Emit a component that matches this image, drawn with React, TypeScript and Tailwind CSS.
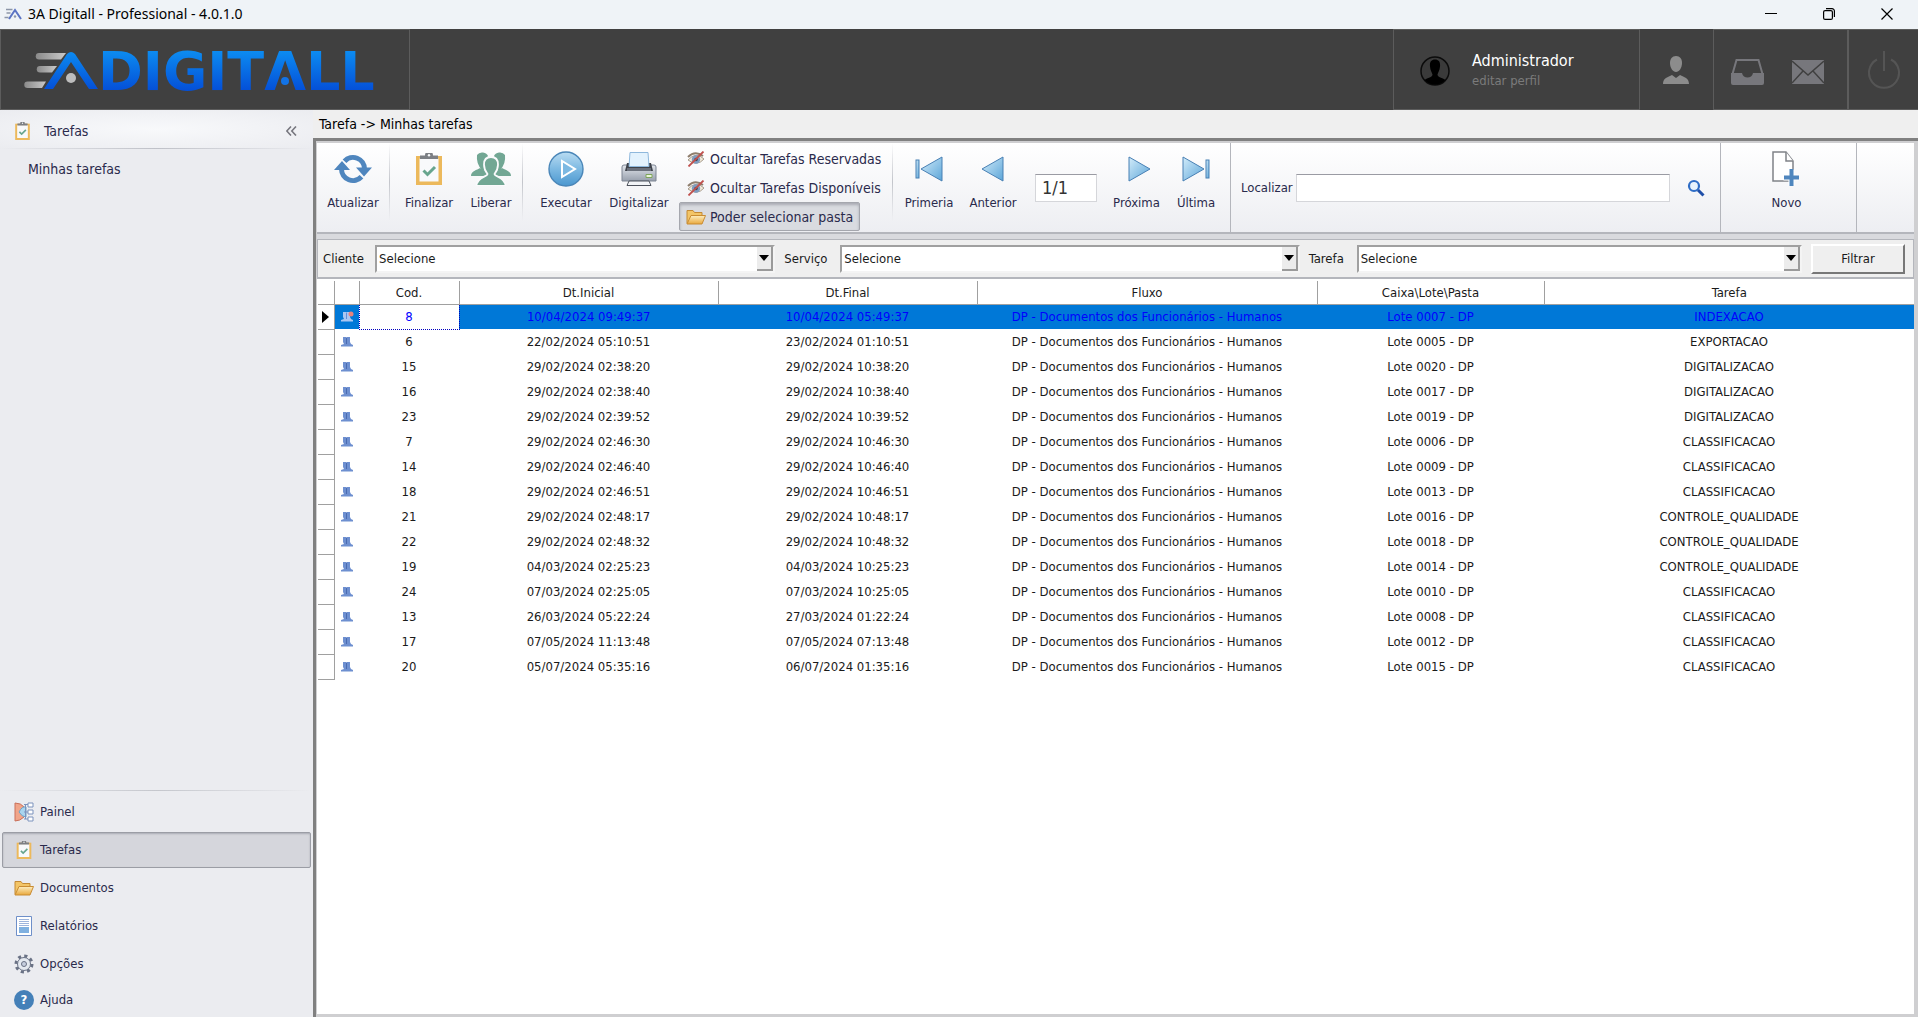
import type { ReactNode } from "react";

const tasks = [
  ["8", "10/04/2024 09:49:37", "10/04/2024 05:49:37", "0007", "INDEXACAO"],
  ["6", "22/02/2024 05:10:51", "23/02/2024 01:10:51", "0005", "EXPORTACAO"],
  ["15", "29/02/2024 02:38:20", "29/02/2024 10:38:20", "0020", "DIGITALIZACAO"],
  ["16", "29/02/2024 02:38:40", "29/02/2024 10:38:40", "0017", "DIGITALIZACAO"],
  ["23", "29/02/2024 02:39:52", "29/02/2024 10:39:52", "0019", "DIGITALIZACAO"],
  ["7", "29/02/2024 02:46:30", "29/02/2024 10:46:30", "0006", "CLASSIFICACAO"],
  ["14", "29/02/2024 02:46:40", "29/02/2024 10:46:40", "0009", "CLASSIFICACAO"],
  ["18", "29/02/2024 02:46:51", "29/02/2024 10:46:51", "0013", "CLASSIFICACAO"],
  ["21", "29/02/2024 02:48:17", "29/02/2024 10:48:17", "0016", "CONTROLE_QUALIDADE"],
  ["22", "29/02/2024 02:48:32", "29/02/2024 10:48:32", "0018", "CONTROLE_QUALIDADE"],
  ["19", "04/03/2024 02:25:23", "04/03/2024 10:25:23", "0014", "CONTROLE_QUALIDADE"],
  ["24", "07/03/2024 02:25:05", "07/03/2024 10:25:05", "0010", "CLASSIFICACAO"],
  ["13", "26/03/2024 05:22:24", "27/03/2024 01:22:24", "0008", "CLASSIFICACAO"],
  ["17", "07/05/2024 11:13:48", "07/05/2024 07:13:48", "0012", "CLASSIFICACAO"],
  ["20", "05/07/2024 05:35:16", "06/07/2024 01:35:16", "0015", "CLASSIFICACAO"],
];

const columns = ["Cod.", "Dt.Inicial", "Dt.Final", "Fluxo", "Caixa\\Lote\\Pasta", "Tarefa"];

/* ---------- icons ---------- */

function Gradients() {
  return (
    <svg width="0" height="0" className="absolute" aria-hidden="true">
      <defs>
        <linearGradient id="logoBlue" x1="0" y1="0" x2="0" y2="1">
          <stop offset="0" stopColor="#0c8af0" />
          <stop offset="1" stopColor="#0450d8" />
        </linearGradient>
        <linearGradient id="logoText" gradientUnits="userSpaceOnUse" x1="0" y1="22" x2="0" y2="60">
          <stop offset="0" stopColor="#0c8af0" />
          <stop offset="1" stopColor="#0450d8" />
        </linearGradient>
        <linearGradient id="silver" x1="0" y1="0" x2="1" y2="0">
          <stop offset="0" stopColor="#8a8a8a" />
          <stop offset="1" stopColor="#c9c9c9" />
        </linearGradient>
        <linearGradient id="navBlue" x1="0" y1="0" x2="1" y2="1">
          <stop offset="0" stopColor="#d3ecfa" />
          <stop offset="1" stopColor="#5ba5d8" />
        </linearGradient>
        <linearGradient id="playBlue" x1="0" y1="0" x2="0" y2="1">
          <stop offset="0" stopColor="#b9dcf2" />
          <stop offset="0.5" stopColor="#7db9e2" />
          <stop offset="1" stopColor="#4b97cf" />
        </linearGradient>
        <linearGradient id="folderGold" x1="0" y1="0" x2="0" y2="1">
          <stop offset="0" stopColor="#fdeec0" />
          <stop offset="1" stopColor="#e9a83c" />
        </linearGradient>
        <linearGradient id="printerGray" x1="0" y1="0" x2="0" y2="1">
          <stop offset="0" stopColor="#e2e6ec" />
          <stop offset="1" stopColor="#98a0ad" />
        </linearGradient>
      </defs>
    </svg>
  );
}

function Logo() {
  return (
    <svg width="390" height="80" viewBox="0 0 390 80" role="img" aria-label="3A Digitall">
      <g fill="url(#silver)">
        <path d="M38 23h27l-5 6.500H38a3.200 3.200 0 0 1 0-6.500z" />
        <path d="M39 36h17l-5 6.500H39a3.200 3.200 0 0 1 0-6.500z" />
        <path d="M26.500 51.500H45l-4 6.500H26.500a3.200 3.200 0 0 1 0-6.500z" />
      </g>
      <path
        d="M43 59 66 24q4-4 8 0l23 35h-9L70 32 52 59z"
        fill="url(#logoBlue)"
      />
      <circle cx="70" cy="48" r="5" fill="#bdbdbd" />
      <text
        x="97"
        y="60"
        fill="url(#logoText)"
        fontFamily="'DejaVu Sans', sans-serif"
        fontWeight="700"
        fontSize="54"
      >
        DIGITΛLL
      </text>
      <circle cx="284" cy="51" r="4" fill="#1273e6" />
    </svg>
  );
}

function AppIcon() {
  return (
    <svg width="18" height="12" viewBox="0 0 18 12" aria-hidden="true">
      <path d="M2 1.500h6.500M2.500 5h4M.5 9.500h4" stroke="#8d96a8" strokeWidth="1.600" />
      <path d="M5 11 11 2l6 9" fill="none" stroke="#5b74c4" strokeWidth="2" />
      <circle cx="11" cy="8.500" r="1.200" fill="#8d96a8" />
    </svg>
  );
}

function ClipboardIcon({ className }: { className: string }) {
  return (
    <svg viewBox="0 0 26 32" className={className} aria-hidden="true">
      <path d="M0 3h26v29H0z" fill="#ecb95c" />
      <path d="M3.500 5.500h19v23h-19z" fill="#f8f9fb" />
      <path d="M4 2.500h5a4 4 0 0 1 8 0h5V6H4z" fill="#7c7f84" />
      <circle cx="13" cy="2.300" r="1.200" fill="#f8f9fb" />
      <path d="m7.500 17.500 4 4 7.500-7.500" fill="none" stroke="#67a58e" strokeWidth="3" />
    </svg>
  );
}

function RefreshIcon() {
  return (
    <svg width="38" height="30" viewBox="0 0 38 30" aria-hidden="true">
      <g fill="none" stroke="#4f86be" strokeWidth="5">
        <path d="M10.500 7.200A11.500 11.500 0 0 1 30.500 15" />
        <path d="M27.500 22.800A11.500 11.500 0 0 1 7.500 15" />
      </g>
      <path d="M0 16 8 7l8 9zM22 13.500h16L30 22.500z" fill="#4f86be" />
    </svg>
  );
}

function GroupIcon() {
  return (
    <svg width="40" height="34" viewBox="0 0 40 34" fill="#72a794" aria-hidden="true">
      <path d="M6 3q2-3 6-2.500Q16 1 17 4l-3 10 1 5-4-1Q5 12 6 3zM34 3q-2-3-6-2.500Q24 1 23 4l3 10-1 5 4-1q6-6 5-15z" />
      <path d="M0 24c0-5 6-6 9-8l7 4v4zM40 24c0-5-6-6-9-8l-7 4v4z" />
      <path
        d="M20 5c5 0 7 3 7 7.500 0 5-2 7.500-3.500 9.500 0 3 11 3 11 12h-29c0-9 11-9 11-12-1.500-2-3.500-4.500-3.500-9.500C13 8 15 5 20 5z"
        stroke="#fafafc"
        strokeWidth="1.800"
      />
    </svg>
  );
}

function PlayIcon() {
  return (
    <svg width="36" height="36" viewBox="0 0 36 36" aria-hidden="true">
      <circle cx="18" cy="18" r="17" fill="url(#playBlue)" stroke="#4a86b8" strokeWidth="1.400" />
      <path d="M14 10v16l13-8z" fill="#7db9e2" stroke="#fff" strokeWidth="2" />
    </svg>
  );
}

function PrinterIcon() {
  return (
    <svg width="36" height="34" viewBox="0 0 36 34" aria-hidden="true">
      <path d="M1 15q0-2 2-2h30q2 0 2 2v14H1z" fill="url(#printerGray)" stroke="#7c8492" />
      <path d="M6 11h24l2 8H4z" fill="#3f434b" />
      <path d="M9 .500h18l1 14H8z" fill="#e3f2fd" stroke="#8fb8dc" />
      <path d="M6 16h24v3H6z" fill="#6a707b" />
      <path d="M25 22.500h6v3h-6z" fill="#e9f5d8" stroke="#7ea45c" />
      <path d="M8 29h20l2 4.500H6z" fill="#f3f5f8" stroke="#4d525c" />
    </svg>
  );
}

function HiddenEyeIcon() {
  return (
    <svg width="18" height="16" viewBox="0 0 18 16" aria-hidden="true">
      <path d="M1 9q8-9 16-1-7 8-16 1z" fill="#f3ead9" stroke="#a59a8c" />
      <path d="M1 6q7-7 15-1" fill="none" stroke="#8e7d6c" strokeWidth="2" />
      <circle cx="9" cy="8.500" r="4.200" fill="#7d9cc0" />
      <circle cx="9" cy="8.500" r="1.800" fill="#3d4654" />
      <path d="M1.500 15.500 16.500.500" stroke="#c0504d" strokeWidth="1.800" />
    </svg>
  );
}

function FolderIcon() {
  return (
    <svg width="20" height="16" viewBox="0 0 20 16" aria-hidden="true">
      <path d="M1 14.500V1.500h6l1.500 2H16V7" fill="#f3c567" stroke="#c48a35" />
      <path d="M1 15 5 6.500h14.500L16 15z" fill="url(#folderGold)" stroke="#c98c33" />
    </svg>
  );
}

function NavIcon({ back, bar }: { back?: boolean; bar?: boolean }) {
  const style = { fill: "url(#navBlue)", stroke: "#4880b4", strokeWidth: 1 };
  return (
    <svg width="28" height="26" viewBox="0 0 28 26" aria-hidden="true">
      {back ? (
        <path d={bar ? "M27 1v24L6 13z" : "M24 1v24L3 13z"} {...style} />
      ) : (
        <path d={bar ? "M1 1v24l21-12z" : "M6 1v24l21-12z"} {...style} />
      )}
      {bar && <rect x={back ? 1 : 24} y="4" width="3" height="18" {...style} />}
    </svg>
  );
}

function NewPageIcon() {
  return (
    <svg width="30" height="36" viewBox="0 0 30 36" aria-hidden="true">
      <path d="M1 1h13l7 9v20H1z" fill="#fff" stroke="#808388" strokeWidth="1.500" />
      <path d="M14 1v9h7" fill="#fff" stroke="#808388" strokeWidth="1.500" />
      <path d="M19.500 18.500v16M11.500 26.500h15" stroke="#fff" strokeWidth="6" />
      <path d="M19.500 18v17M12 26.500h15" stroke="#4f86be" strokeWidth="4" />
    </svg>
  );
}

function SearchIcon() {
  return (
    <svg width="18" height="18" viewBox="0 0 18 18" aria-hidden="true">
      <circle cx="7" cy="7" r="5" fill="#e8f3fd" stroke="#2f6dc6" strokeWidth="2.200" />
      <path d="m11 11 5.500 5.500" stroke="#1f4fa8" strokeWidth="3" />
    </svg>
  );
}

function UserRowIcon({ locked }: { locked?: boolean }) {
  return (
    <svg width="14" height="12" viewBox="0 0 14 12" className="mx-auto" aria-hidden="true">
      <path
        d="M3 1h3l.5.500L7 1h3v5l1 2 2 1v1.500H1V9l3-1-1-2z"
        fill={locked ? "#a9c6f2" : "#6d8fd0"}
      />
      <path d="M6.500 2v6" stroke={locked ? "#5f8edb" : "#4a6bb0"} />
      {locked && <circle cx="11" cy="3" r="2.500" fill="#e8837e" />}
    </svg>
  );
}

function PanelIcon() {
  return (
    <svg width="20" height="20" viewBox="0 0 20 20" aria-hidden="true">
      <path d="M1 1q6 0 9 4v10q-4 4-9 4z" fill="#f0a58a" stroke="#c9705b" />
      <path d="M5 10q3-6 7-5v10q-4 0-7-5z" fill="#a9d4ee" stroke="#6aa2c8" />
      <path d="M10 2.500h4M10 10h4M10 17h4M11.500 2.500V17" stroke="#7c93bd" fill="none" />
      <path d="M14 1h5v4h-5zM14 8h5v4h-5zM14 15h5v4h-5z" fill="#fff" stroke="#7c93bd" />
    </svg>
  );
}

function ReportIcon() {
  return (
    <svg width="16" height="20" viewBox="0 0 16 20" aria-hidden="true">
      <path d="M.5.500h15v19H.5z" fill="#fff" stroke="#6e8fc9" />
      <path d="M3 3.500h10M3 5.500h10M3 7.500h10M3 9.500h10" stroke="#9db4dc" />
      <path d="M3 11h10v6H3z" fill="#7fb0e0" />
    </svg>
  );
}

function GearIcon() {
  return (
    <svg width="20" height="20" viewBox="0 0 20 20" aria-hidden="true">
      <circle cx="10" cy="10" r="8" fill="none" stroke="#6a7285" strokeWidth="3" strokeDasharray="3.140 3.140" />
      <circle cx="10" cy="10" r="6.500" fill="#e4e9f0" stroke="#6a7285" />
      <circle cx="10" cy="10" r="2.500" fill="#c5cede" stroke="#6a7285" />
    </svg>
  );
}

function HelpIcon() {
  return (
    <span className="flex h-5 w-5 items-center justify-center rounded-full bg-[#4480b8] font-bold text-white">
      ?
    </span>
  );
}

/* ---------- building blocks ---------- */

function ToolButton({ icon, label, className }: { icon: ReactNode; label: string; className: string }) {
  return (
    <button className={`flex shrink-0 flex-col items-center ${className}`}>
      <span className="flex h-13 items-center">{icon}</span>
      <span className="leading-4">{label}</span>
    </button>
  );
}

function Separator() {
  return <div className="h-[78px] w-px shrink-0 bg-linear-to-b from-transparent via-[#c3c5cb] to-transparent" />;
}

function ToggleButton({ icon, label, active }: { icon: ReactNode; label: string; active?: boolean }) {
  return (
    <button
      aria-pressed={!!active}
      className={
        active
          ? "flex h-[29px] items-center gap-1 rounded-xs border border-[#a5a7ae] bg-[#d9dbe0] px-1.5 text-sm shadow-[inset_0_2px_3px_#a9abb3]"
          : "flex h-[29px] items-center gap-1 border border-transparent px-1.5 text-sm"
      }
    >
      <span className="flex w-5 justify-center">{icon}</span>
      {label}
    </button>
  );
}

type FilterSelectProps = { id: string; label: string; className: string; labelClass: string };

function FilterSelect({ id, label, className, labelClass }: FilterSelectProps) {
  return (
    <div className={`flex items-center ${className}`}>
      <label htmlFor={id} className={`shrink-0 ${labelClass}`}>
        {label}
      </label>
      <div className="relative flex-1">
        <select
          id={id}
          className="block h-7 w-full appearance-none border-2 border-[#f4f4f4] border-t-[#a0a0a0] border-l-[#a0a0a0] bg-white px-0.5"
        >
          <option>Selecione</option>
        </select>
        <span className="pointer-events-none absolute top-0.5 right-0.5 bottom-0.5 flex w-4 items-center justify-center border-r-2 border-b-2 border-[#9a9a9a] bg-[#ececec]">
          <svg width="10" height="6" viewBox="0 0 10 6">
            <path d="M0 0h10L5 6z" />
          </svg>
        </span>
      </div>
    </div>
  );
}

function NavItem({ icon, label, active }: { icon: ReactNode; label: string; active?: boolean }) {
  return (
    <a
      href="#"
      className={
        active
          ? "mx-0.5 my-px flex h-[36px] items-center gap-1 rounded-xs border border-[#9b9da5] bg-[#d5d6dc] pl-[9px] shadow-[inset_0_1px_2px_#a9abb3]"
          : "mx-0.5 flex h-[38px] items-center gap-1 pl-2.5 last:h-[34px]"
      }
    >
      <span className="flex w-6 justify-center">{icon}</span>
      {label}
    </a>
  );
}

/* ---------- page sections ---------- */

function TitleBar() {
  return (
    <div className="flex h-[29px] items-center bg-[#eff3f7] pr-0.5 pb-px pl-1 font-['Noto_Sans',sans-serif] text-sm text-black">
      <AppIcon />
      <span className="ml-1.5 flex-1">3A Digitall - Professional - 4.0.1.0</span>
      <button aria-label="Minimizar" className="flex h-full w-[58px] items-center justify-center">
        <svg width="12" height="12" viewBox="0 0 12 12" stroke="#000">
          <path d="M0 5.500h12" />
        </svg>
      </button>
      <button aria-label="Restaurar" className="flex h-full w-[58px] items-center justify-center">
        <svg width="12" height="12" viewBox="0 0 12 12" fill="none" stroke="#000" strokeWidth="1.200">
          <rect x="0.600" y="2.600" width="8.800" height="8.800" rx="1.500" />
          <path d="M3 .6h6a2.400 2.400 0 0 1 2.400 2.400v6" />
        </svg>
      </button>
      <button aria-label="Fechar" className="flex h-full w-[58px] items-center justify-center">
        <svg width="12" height="12" viewBox="0 0 12 12" stroke="#000" strokeWidth="1.200">
          <path d="m.5.500 11 11M11.500.5l-11 11" />
        </svg>
      </button>
    </div>
  );
}

function Header() {
  return (
    <header className="flex h-[81px] bg-[#404040]">
      <div className="flex w-[410px] items-center border border-[#5c5c5c]">
        <Logo />
      </div>
      <div className="flex-1" />
      <div className="flex w-[247px] items-center border border-[#5c5c5c] pt-0.5 pl-[26px]">
        <svg width="30" height="32" viewBox="0 0 30 32" aria-hidden="true">
          <circle cx="15" cy="16" r="14" fill="#3a3a3a" stroke="#0c0c0c" strokeWidth="1.500" />
          <path
            d="M15 4.500c4 0 5.500 3 5 7-.3 4-2 6-2.500 8 0 3 5 3 8 5.500A14 14 0 0 1 4.500 25c3-2.500 8-2.500 8-5.500-.5-2-2.200-4-2.500-8-.5-4 1-7 5-7z"
            fill="#000"
          />
        </svg>
        <div className="ml-[22px]">
          <p className="text-base leading-5 text-white">Administrador</p>
          <a href="#" className="block leading-5 text-[#7b7b7b]">
            editar perfil
          </a>
        </div>
      </div>
      <button aria-label="Usuário" className="flex w-[73px] items-center justify-center pr-0.5">
        <svg width="26" height="28" viewBox="0 0 26 28" fill="#8c8c8c">
          <path d="M13 0c4 0 6 3 6 7 0 5-3 9-6 9s-6-4-6-9c0-4 2-7 6-7z" />
          <path d="M0 28c0-6 5-7 9-9l4 3 4-3c4 2 9 3 9 9z" />
        </svg>
      </button>
      <div className="flex w-[135px] items-center justify-center gap-7 border border-[#5c5c5c] pt-1 pr-1.5">
        <button aria-label="Caixa de entrada">
          <svg width="33" height="26" viewBox="0 0 33 26">
            <path d="M1.500 15 5.500 1h22l4 14" fill="none" stroke="#77777c" strokeWidth="2" />
            <path d="M0 14h11c1 6 10 6 11 0h11v10q0 2-2 2H2q-2 0-2-2z" fill="#77777c" />
          </svg>
        </button>
        <button aria-label="Mensagens">
          <svg width="32" height="24" viewBox="0 0 32 24">
            <path d="M0 0h32v24H0z" fill="#77777c" />
            <path d="m0 1 16 14L32 1M0 23l11-12M32 23 21 11" fill="none" stroke="#404040" strokeWidth="1.500" />
          </svg>
        </button>
      </div>
      <button aria-label="Sair" className="flex w-[70px] items-center justify-center border border-r-0 border-[#5c5c5c]">
        <svg width="34" height="40" viewBox="0 0 34 40" fill="none" stroke="#555" strokeWidth="2">
          <path d="M17 1v20M10 9.500a15 15 0 1 0 14 0" />
        </svg>
      </button>
    </header>
  );
}

function Sidebar() {
  return (
    <aside className="flex w-[313px] shrink-0 flex-col bg-[#ebecf0] text-[#2a2a4c]">
      <div className="flex h-[38px] items-center bg-radial from-[#f8f9fb] to-[#ebecf0] pt-1 pr-4 pl-[15px]">
        <ClipboardIcon className="h-[18px] w-[15px]" />
        <span className="ml-3.5 flex-1 text-sm">Tarefas</span>
        <button aria-label="Recolher">
          <svg width="11" height="10" viewBox="0 0 11 10" fill="none" stroke="#77777f" strokeWidth="1.600">
            <path d="M5 .5.800 5 5 9.500M10 .5 5.800 5l4.200 4.500" />
          </svg>
        </button>
      </div>
      <div className="h-px bg-linear-to-r from-transparent via-[#bfc1c8] to-transparent" />
      <a href="#" className="px-7 py-2.5 text-sm">
        Minhas tarefas
      </a>
      <div className="flex-1" />
      <div className="mb-0.5 h-px bg-linear-to-r from-transparent via-[#c5c7cd] to-transparent" />
      <nav>
        <NavItem icon={<PanelIcon />} label="Painel" />
        <NavItem icon={<ClipboardIcon className="h-[18px] w-4" />} label="Tarefas" active />
        <NavItem icon={<FolderIcon />} label="Documentos" />
        <NavItem icon={<ReportIcon />} label="Relatórios" />
        <NavItem icon={<GearIcon />} label="Opções" />
        <NavItem icon={<HelpIcon />} label="Ajuda" />
      </nav>
    </aside>
  );
}

function Toolbar() {
  return (
    <div className="flex h-[91px] border-b-2 border-[#b4b6bc] bg-linear-to-b from-white to-[#edeef2] text-[#2a2a4c]">
      <ToolButton icon={<RefreshIcon />} label="Atualizar" className="w-[72px]" />
      <Separator />
      <ToolButton icon={<ClipboardIcon className="h-8 w-[26px]" />} label="Finalizar" className="ml-2 w-[62px]" />
      <ToolButton icon={<GroupIcon />} label="Liberar" className="w-[62px]" />
      <Separator />
      <ToolButton icon={<PlayIcon />} label="Executar" className="ml-1.5 w-[74px]" />
      <ToolButton icon={<PrinterIcon />} label="Digitalizar" className="w-[72px]" />
      <div className="ml-1 flex shrink-0 flex-col items-start pt-px">
        <ToggleButton icon={<HiddenEyeIcon />} label="Ocultar Tarefas Reservadas" />
        <ToggleButton icon={<HiddenEyeIcon />} label="Ocultar Tarefas Disponíveis" />
        <ToggleButton icon={<FolderIcon />} label="Poder selecionar pasta" active />
      </div>
      <div className="flex-1" />
      <Separator />
      <ToolButton icon={<NavIcon back bar />} label="Primeria" className="ml-1 w-[64px]" />
      <ToolButton icon={<NavIcon back />} label="Anterior" className="w-[64px]" />
      <input
        aria-label="Página"
        defaultValue="1/1"
        className="mx-2.5 mt-[31px] h-7 w-[62px] shrink-0 border border-[#d5d6da] border-t-[#9a9ba3] bg-white px-1.5 text-lg text-[#333]"
      />
      <ToolButton icon={<NavIcon />} label="Próxima" className="w-[59px]" />
      <ToolButton icon={<NavIcon bar />} label="Última" className="mr-1 w-[60px]" />
      <div className="flex w-[490px] items-start border-l border-[#b4b6bc] pt-[31px] pl-2.5">
        <label htmlFor="localizar" className="w-[55px] leading-7">
          Localizar
        </label>
        <input id="localizar" className="h-7 flex-1 border border-[#d5d6da] border-t-[#9a9ba3] bg-white px-1" />
        <button aria-label="Pesquisar" className="mr-[15px] ml-[17px] flex h-7 items-center">
          <SearchIcon />
        </button>
      </div>
      <div className="flex w-[137px] justify-center border-x border-[#b4b6bc] pr-1">
        <ToolButton icon={<NewPageIcon />} label="Novo" className="w-16" />
      </div>
      <div className="w-[57px]" />
    </div>
  );
}

function Filters() {
  return (
    <div className="mt-[5px] flex h-[40px] items-center gap-[9px] border border-b-2 border-[#b4b6bc] bg-[#efefef] pr-2 pl-[5px]">
      <FilterSelect id="cliente" label="Cliente" className="flex-[452]" labelClass="w-[52px]" />
      <FilterSelect id="servico" label="Serviço" className="flex-[515]" labelClass="w-[56px]" />
      <FilterSelect id="tarefa" label="Tarefa" className="flex-[493]" labelClass="w-[48px]" />
      <button className="h-[30px] w-[94px] border-2 border-[#777] border-t-white border-l-white bg-[#efefef]">
        Filtrar
      </button>
    </div>
  );
}

function TaskTable() {
  return (
    <table className="w-full table-fixed border-collapse text-center">
      <colgroup>
        <col className="w-[16px]" />
        <col className="w-[25px]" />
        <col className="w-[100px]" />
        <col className="w-[259px]" />
        <col className="w-[259px]" />
        <col className="w-[340px]" />
        <col className="w-[227px]" />
        <col />
      </colgroup>
      <thead>
        <tr className="h-[23px]">
          <th className="border-r border-b border-[#a0a0a0]" />
          <th className="border-r border-b border-[#a0a0a0]" />
          {columns.map((column) => (
            <th key={column} className="border-r border-b border-[#a0a0a0] p-0 font-normal last:border-r-0">
              {column}
            </th>
          ))}
        </tr>
      </thead>
      <tbody>
        {tasks.map(([code, start, end, lot, step], index) => {
          const selected = index === 0;
          return (
            <tr key={code} className={selected ? "h-[25px] bg-[#0078d7] text-[#0000ff]" : "h-[25px]"}>
              <td className="border-r border-b border-[#a0a0a0] bg-white p-0">
                {selected && (
                  <svg width="7" height="12" viewBox="0 0 7 12" className="mx-auto">
                    <path d="M0 0v12l7-6z" />
                  </svg>
                )}
              </td>
              <td className="p-0">
                <UserRowIcon locked={selected} />
              </td>
              <td className={selected ? "border border-dotted border-[#0000c0] bg-white p-0" : "p-0"}>{code}</td>
              <td className="p-0">{start}</td>
              <td className="p-0">{end}</td>
              <td className="p-0">DP - Documentos dos Funcionários - Humanos</td>
              <td className="p-0">Lote {lot} - DP</td>
              <td className="p-0">{step}</td>
            </tr>
          );
        })}
      </tbody>
    </table>
  );
}

export default function App() {
  return (
    <div className="flex min-h-screen flex-col bg-[#efefef] font-['DejaVu_Sans_Condensed','Noto_Sans',sans-serif] text-[13px] text-[#1a1a1a]">
      <Gradients />
      <TitleBar />
      <Header />
      <div className="flex flex-1">
        <Sidebar />
        <div className="flex min-w-0 flex-1 flex-col">
          <div className="flex h-[28px] items-center pl-[6px] text-sm text-black">Tarefa -&gt; Minhas tarefas</div>
          <main className="flex-1 border-t-[3px] border-l-[3px] border-[#808080] bg-[#cfcfd1] pt-0.5 pr-1 pb-[3px] pl-px">
            <div className="flex h-full flex-col bg-[#d9dade]">
              <Toolbar />
              <Filters />
              <div className="flex-1 bg-white pt-0.5 pl-px">
                <TaskTable />
              </div>
            </div>
          </main>
        </div>
      </div>
    </div>
  );
}
